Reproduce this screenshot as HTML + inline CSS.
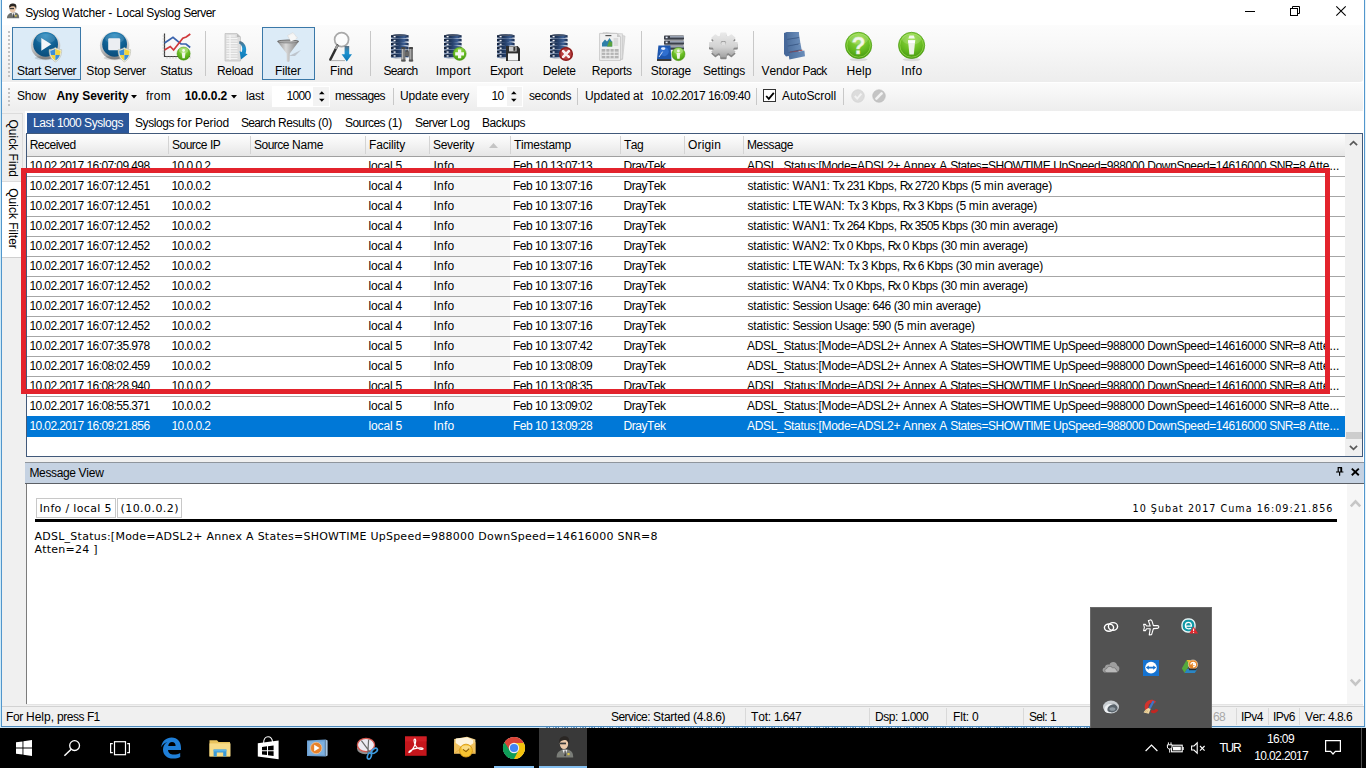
<!DOCTYPE html>
<html lang="tr">
<head>
<meta charset="utf-8">
<title>Syslog Watcher - Local Syslog Server</title>
<style>
html,body{margin:0;padding:0;}
body{width:1366px;height:768px;overflow:hidden;background:#fff;font-family:"Liberation Sans",sans-serif;font-size:12px;color:#000;}
#root{position:relative;width:1366px;height:768px;overflow:hidden;background:#fff;}
.b{position:absolute;box-sizing:border-box;}
.t{position:absolute;white-space:pre;font-family:"Liberation Sans",sans-serif;font-size:12px;line-height:16px;font-kerning:none;}
.t i{font-style:normal;}
.d{position:absolute;white-space:pre;font-family:"DejaVu Sans","Liberation Sans",sans-serif;line-height:16px;font-kerning:none;}
svg{position:absolute;overflow:visible;}
</style>
</head>
<body>
<div id="root">
<div class="b " style="left:0px;top:0px;width:1366px;height:728px;background:#ffffff;"></div>
<div class="b " style="left:2px;top:110px;width:1361px;height:596px;background:#f0f0f0;"></div>
<span class="t" style="left:25.2px;top:5px;word-spacing:-0.33px;"><i style="letter-spacing:-0.34px">Syslog</i> <i style="letter-spacing:-0.24px">Watcher</i> <i style="letter-spacing:1.00px">-</i> <i style="letter-spacing:-0.34px">Local</i> <i style="letter-spacing:-0.34px">Syslog</i> <i style="letter-spacing:-0.56px">Server</i></span>
<div class="b " style="left:2px;top:25px;width:1361px;height:57px;background:linear-gradient(#fcfcfc,#f7f7f7 40%,#ededed);border-radius:0 0 3px 0;"></div>
<div class="b " style="left:2px;top:82.5px;width:1361px;height:28px;background:linear-gradient(#fbfbfb,#f6f6f6 40%,#ededed);border-radius:0 0 3px 0;"></div>
<div class="b " style="left:25px;top:111px;width:1338px;height:23px;background:#ffffff;"></div>
<div class="b " style="left:12px;top:27px;width:69px;height:53px;background:#dcebf7;border:1px solid #3a78a8;"></div>
<div class="b " style="left:262px;top:27px;width:53px;height:53px;background:#dcebf7;border:1px solid #3a78a8;"></div>
<span class="t" style="left:17.0px;top:63px;word-spacing:-0.33px;"><i style="letter-spacing:-0.27px">Start</i> <i style="letter-spacing:-0.56px">Server</i></span>
<span class="t" style="left:86.3px;top:63px;word-spacing:-0.33px;"><i style="letter-spacing:-0.17px">Stop</i> <i style="letter-spacing:-0.56px">Server</i></span>
<span class="t" style="left:160.2px;top:63px;word-spacing:-0.33px;"><i style="letter-spacing:-0.34px">Status</i></span>
<span class="t" style="left:217.0px;top:63px;word-spacing:-0.33px;"><i style="letter-spacing:-0.34px">Reload</i></span>
<span class="t" style="left:275.0px;top:63px;word-spacing:-0.33px;"><i style="letter-spacing:-0.11px">Filter</i></span>
<span class="t" style="left:329.9px;top:63px;word-spacing:-0.33px;"><i style="letter-spacing:-0.09px">Find</i></span>
<span class="t" style="left:383.5px;top:63px;word-spacing:-0.33px;"><i style="letter-spacing:-0.67px">Search</i></span>
<span class="t" style="left:435.7px;top:63px;word-spacing:-0.33px;"><i style="letter-spacing:0.17px">Import</i></span>
<span class="t" style="left:489.9px;top:63px;word-spacing:-0.33px;"><i style="letter-spacing:-0.28px">Export</i></span>
<span class="t" style="left:542.7px;top:63px;word-spacing:-0.33px;"><i style="letter-spacing:-0.28px">Delete</i></span>
<span class="t" style="left:591.8px;top:63px;word-spacing:-0.33px;"><i style="letter-spacing:-0.29px">Reports</i></span>
<span class="t" style="left:650.8px;top:63px;word-spacing:-0.33px;"><i style="letter-spacing:-0.29px">Storage</i></span>
<span class="t" style="left:703.0px;top:63px;word-spacing:-0.33px;"><i style="letter-spacing:-0.17px">Settings</i></span>
<span class="t" style="left:761.6px;top:63px;word-spacing:-0.33px;"><i style="letter-spacing:-0.12px">Vendor</i> <i style="letter-spacing:-0.67px">Pack</i></span>
<span class="t" style="left:846.6px;top:63px;word-spacing:-0.33px;"><i style="letter-spacing:0.08px">Help</i></span>
<span class="t" style="left:901.3px;top:63px;word-spacing:-0.33px;"><i style="letter-spacing:0.25px">Info</i></span>
<div class="b " style="left:205px;top:31px;width:1px;height:45px;background:#c8c8c8;"></div>
<div class="b " style="left:370px;top:31px;width:1px;height:45px;background:#c8c8c8;"></div>
<div class="b " style="left:641px;top:31px;width:1px;height:45px;background:#c8c8c8;"></div>
<div class="b " style="left:753px;top:31px;width:1px;height:45px;background:#c8c8c8;"></div>
<div class="b " style="left:8px;top:31px;width:2px;height:2px;background:#c2c2c2;"></div>
<div class="b " style="left:8px;top:35px;width:2px;height:2px;background:#c2c2c2;"></div>
<div class="b " style="left:8px;top:39px;width:2px;height:2px;background:#c2c2c2;"></div>
<div class="b " style="left:8px;top:43px;width:2px;height:2px;background:#c2c2c2;"></div>
<div class="b " style="left:8px;top:47px;width:2px;height:2px;background:#c2c2c2;"></div>
<div class="b " style="left:8px;top:51px;width:2px;height:2px;background:#c2c2c2;"></div>
<div class="b " style="left:8px;top:55px;width:2px;height:2px;background:#c2c2c2;"></div>
<div class="b " style="left:8px;top:59px;width:2px;height:2px;background:#c2c2c2;"></div>
<div class="b " style="left:8px;top:63px;width:2px;height:2px;background:#c2c2c2;"></div>
<div class="b " style="left:8px;top:67px;width:2px;height:2px;background:#c2c2c2;"></div>
<div class="b " style="left:8px;top:71px;width:2px;height:2px;background:#c2c2c2;"></div>
<div class="b " style="left:8px;top:75px;width:2px;height:2px;background:#c2c2c2;"></div>
<div class="b " style="left:8px;top:88px;width:2px;height:2px;background:#c2c2c2;"></div>
<div class="b " style="left:8px;top:92px;width:2px;height:2px;background:#c2c2c2;"></div>
<div class="b " style="left:8px;top:96px;width:2px;height:2px;background:#c2c2c2;"></div>
<div class="b " style="left:8px;top:100px;width:2px;height:2px;background:#c2c2c2;"></div>
<div class="b " style="left:8px;top:104px;width:2px;height:2px;background:#c2c2c2;"></div>
<span class="t" style="left:17.0px;top:88px;word-spacing:-0.33px;"><i style="letter-spacing:-0.25px">Show</i></span>
<span class="t" style="left:56.5px;top:88px;letter-spacing:-0.064px;font-weight:bold;">Any Severity</span>
<span class="t" style="left:146.0px;top:88px;word-spacing:-0.33px;"><i style="letter-spacing:0.25px">from</i></span>
<span class="t" style="left:184.7px;top:88px;letter-spacing:-0.110px;font-weight:bold;">10.0.0.2</span>
<span class="t" style="left:246.0px;top:88px;word-spacing:-0.33px;"><i style="letter-spacing:-0.17px">last</i></span>
<div class="b " style="left:272px;top:86px;width:58px;height:21px;background:#ffffff;"></div>
<div class="b " style="left:313px;top:87px;width:16px;height:19px;background:#f3f3f3;"></div>
<span class="t" style="left:286.6px;top:88px;word-spacing:-0.33px;"><i style="letter-spacing:-0.67px">1000</i></span>
<span class="t" style="left:335.0px;top:88px;word-spacing:-0.33px;"><i style="letter-spacing:-0.59px">messages</i></span>
<div class="b " style="left:393px;top:88px;width:1px;height:17px;background:#c8c8c8;"></div>
<span class="t" style="left:400.0px;top:88px;word-spacing:-0.33px;"><i style="letter-spacing:-0.12px">Update</i> <i style="letter-spacing:-0.27px">every</i></span>
<div class="b " style="left:477px;top:86px;width:46px;height:21px;background:#ffffff;"></div>
<div class="b " style="left:507px;top:87px;width:15px;height:19px;background:#f3f3f3;"></div>
<span class="t" style="left:491.5px;top:88px;word-spacing:-0.33px;"><i style="letter-spacing:-0.67px">10</i></span>
<span class="t" style="left:529.0px;top:88px;word-spacing:-0.33px;"><i style="letter-spacing:-0.38px">seconds</i></span>
<div class="b " style="left:577px;top:88px;width:1px;height:17px;background:#c8c8c8;"></div>
<span class="t" style="left:585.0px;top:88px;word-spacing:-0.33px;"><i style="letter-spacing:-0.05px">Updated</i> <i style="letter-spacing:-0.00px">at</i></span>
<span class="t" style="left:651.0px;top:88px;word-spacing:-0.33px;"><i style="letter-spacing:-0.61px">10.02.2017</i> <i style="letter-spacing:-0.59px">16:09:40</i></span>
<div class="b " style="left:756px;top:88px;width:1px;height:17px;background:#c8c8c8;"></div>
<div class="b " style="left:763px;top:89px;width:13px;height:13px;background:#ffffff;border:1px solid #333;"></div>
<span class="t" style="left:782.0px;top:88px;word-spacing:-0.33px;"><i style="letter-spacing:-0.07px">AutoScroll</i></span>
<div class="b " style="left:843px;top:88px;width:1px;height:17px;background:#c8c8c8;"></div>
<div class="b " style="left:2px;top:113px;width:21px;height:69px;background:#efefef;border:1px solid #dcdcdc;border-left:none;"></div>
<div class="b " style="left:2px;top:182px;width:20px;height:76px;background:#ffffff;border-bottom:1px solid #cfcfcf;"></div>
<span class="t" style="left:0;top:0;font-size:12px;line-height:16px;letter-spacing:0.017px;transform-origin:0 0;transform:translate(20.50px,119.50px) rotate(90deg);">Quick Find</span>
<span class="t" style="left:0;top:0;font-size:12px;line-height:16px;letter-spacing:-0.016px;transform-origin:0 0;transform:translate(20.50px,188.30px) rotate(90deg);">Quick Filter</span>
<div class="b " style="left:27px;top:113px;width:102px;height:21px;background:#2b579a;"></div>
<span class="t" style="left:33.0px;top:115px;word-spacing:-0.33px;color:#fff;"><i style="letter-spacing:-0.42px">Last</i> <i style="letter-spacing:-0.67px">1000</i> <i style="letter-spacing:-0.43px">Syslogs</i></span>
<span class="t" style="left:135.0px;top:115px;word-spacing:-0.33px;"><i style="letter-spacing:-0.43px">Syslogs</i> <i style="letter-spacing:0.33px">for</i> <i style="letter-spacing:-0.11px">Period</i></span>
<span class="t" style="left:241.0px;top:115px;word-spacing:-0.33px;"><i style="letter-spacing:-0.67px">Search</i> <i style="letter-spacing:-0.43px">Results</i> <i style="letter-spacing:-0.22px">(0)</i></span>
<span class="t" style="left:345.0px;top:115px;word-spacing:-0.33px;"><i style="letter-spacing:-0.57px">Sources</i> <i style="letter-spacing:-0.22px">(1)</i></span>
<span class="t" style="left:415.0px;top:115px;word-spacing:-0.33px;"><i style="letter-spacing:-0.56px">Server</i> <i style="letter-spacing:-0.01px">Log</i></span>
<span class="t" style="left:482.0px;top:115px;word-spacing:-0.33px;"><i style="letter-spacing:-0.43px">Backups</i></span>
<div class="b " style="left:26px;top:133px;width:1337px;height:324px;background:#ffffff;border:1px solid #41597a;"></div>
<div class="b " style="left:27px;top:134px;width:1318px;height:23px;background:linear-gradient(#ffffff,#f4f4f4 45%,#e6e6e6);border-bottom:1px solid #a0a0a0;"></div>
<div class="b " style="left:430px;top:157px;width:80px;height:260px;background:#f7f7f7;"></div>
<span class="t" style="left:29.7px;top:137px;word-spacing:-0.33px;"><i style="letter-spacing:-0.50px">Received</i></span>
<div class="b " style="left:168px;top:136px;width:1px;height:18px;background:#d4d4d4;"></div>
<span class="t" style="left:172.0px;top:137px;word-spacing:-0.33px;"><i style="letter-spacing:-0.50px">Source</i> <i style="letter-spacing:-0.67px">IP</i></span>
<div class="b " style="left:250px;top:136px;width:1px;height:18px;background:#d4d4d4;"></div>
<span class="t" style="left:254.0px;top:137px;word-spacing:-0.33px;"><i style="letter-spacing:-0.50px">Source</i> <i style="letter-spacing:-0.25px">Name</i></span>
<div class="b " style="left:365px;top:136px;width:1px;height:18px;background:#d4d4d4;"></div>
<span class="t" style="left:369.0px;top:137px;word-spacing:-0.33px;"><i style="letter-spacing:-0.17px">Facility</i></span>
<div class="b " style="left:429px;top:136px;width:1px;height:18px;background:#d4d4d4;"></div>
<span class="t" style="left:433.0px;top:137px;word-spacing:-0.33px;"><i style="letter-spacing:-0.29px">Severity</i></span>
<div class="b " style="left:510px;top:136px;width:1px;height:18px;background:#d4d4d4;"></div>
<span class="t" style="left:514.0px;top:137px;word-spacing:-0.33px;"><i style="letter-spacing:-0.26px">Timestamp</i></span>
<div class="b " style="left:620px;top:136px;width:1px;height:18px;background:#d4d4d4;"></div>
<span class="t" style="left:624.0px;top:137px;word-spacing:-0.33px;"><i style="letter-spacing:-0.56px">Tag</i></span>
<div class="b " style="left:684px;top:136px;width:1px;height:18px;background:#d4d4d4;"></div>
<span class="t" style="left:688.0px;top:137px;word-spacing:-0.33px;"><i style="letter-spacing:0.17px">Origin</i></span>
<div class="b " style="left:743px;top:136px;width:1px;height:18px;background:#d4d4d4;"></div>
<span class="t" style="left:747.0px;top:137px;word-spacing:-0.33px;"><i style="letter-spacing:-0.38px">Message</i></span>
<svg style="left:489px;top:143px" width="9" height="5"><path d="M0 5 L4.5 0 L9 5Z" fill="#c4c4c4"/></svg>
<span class="t" style="left:29.5px;top:158px;word-spacing:-0.33px;"><i style="letter-spacing:-0.61px">10.02.2017</i> <i style="letter-spacing:-0.59px">16:07:09.498</i></span>
<span class="t" style="left:171.5px;top:158px;word-spacing:-0.33px;"><i style="letter-spacing:-0.55px">10.0.0.2</i></span>
<span class="t" style="left:368.5px;top:158px;word-spacing:-0.33px;"><i style="letter-spacing:-0.14px">local</i> <i style="letter-spacing:-0.67px">5</i></span>
<span class="t" style="left:433.5px;top:158px;word-spacing:-0.33px;"><i style="letter-spacing:0.25px">Info</i></span>
<span class="t" style="left:513.0px;top:158px;word-spacing:-0.33px;"><i style="letter-spacing:-0.56px">Feb</i> <i style="letter-spacing:-0.67px">10</i> <i style="letter-spacing:-0.59px">13:07:13</i></span>
<span class="t" style="left:623.5px;top:158px;word-spacing:-0.33px;"><i style="letter-spacing:-0.48px">DrayTek</i></span>
<span class="t" style="left:747.0px;top:158px;word-spacing:-0.33px;"><i style="letter-spacing:-0.32px">ADSL_Status:[Mode=ADSL2+</i> <i style="letter-spacing:-0.20px">Annex</i> <i style="letter-spacing:-0.00px">A</i> <i style="letter-spacing:-0.47px">States=SHOWTIME</i> <i style="letter-spacing:-0.43px">UpSpeed=988000</i> <i style="letter-spacing:-0.38px">DownSpeed=14616000</i> <i style="letter-spacing:-0.60px">SNR=8</i> <i style="letter-spacing:-0.05px">Atte...</i></span>
<div class="b " style="left:27px;top:176px;width:1318px;height:1px;background:#a6a6a6;"></div>
<span class="t" style="left:29.5px;top:178px;word-spacing:-0.33px;"><i style="letter-spacing:-0.61px">10.02.2017</i> <i style="letter-spacing:-0.59px">16:07:12.451</i></span>
<span class="t" style="left:171.5px;top:178px;word-spacing:-0.33px;"><i style="letter-spacing:-0.55px">10.0.0.2</i></span>
<span class="t" style="left:368.5px;top:178px;word-spacing:-0.33px;"><i style="letter-spacing:-0.14px">local</i> <i style="letter-spacing:-0.67px">4</i></span>
<span class="t" style="left:433.5px;top:178px;word-spacing:-0.33px;"><i style="letter-spacing:0.25px">Info</i></span>
<span class="t" style="left:513.0px;top:178px;word-spacing:-0.33px;"><i style="letter-spacing:-0.56px">Feb</i> <i style="letter-spacing:-0.67px">10</i> <i style="letter-spacing:-0.59px">13:07:16</i></span>
<span class="t" style="left:623.5px;top:178px;word-spacing:-0.33px;"><i style="letter-spacing:-0.48px">DrayTek</i></span>
<span class="t" style="left:747.5px;top:178px;word-spacing:-0.33px;"><i style="letter-spacing:-0.13px">statistic:</i> <i style="letter-spacing:-0.20px">WAN1:</i> <i style="letter-spacing:-1.16px">Tx</i> <i style="letter-spacing:-0.67px">231</i> <i style="letter-spacing:-0.34px">Kbps,</i> <i style="letter-spacing:-1.33px">Rx</i> <i style="letter-spacing:-0.67px">2720</i> <i style="letter-spacing:-0.34px">Kbps</i> <i style="letter-spacing:-0.33px">(5</i> <i style="letter-spacing:0.22px">min</i> <i style="letter-spacing:-0.29px">average)</i></span>
<div class="b " style="left:27px;top:196px;width:1318px;height:1px;background:#a6a6a6;"></div>
<span class="t" style="left:29.5px;top:198px;word-spacing:-0.33px;"><i style="letter-spacing:-0.61px">10.02.2017</i> <i style="letter-spacing:-0.59px">16:07:12.451</i></span>
<span class="t" style="left:171.5px;top:198px;word-spacing:-0.33px;"><i style="letter-spacing:-0.55px">10.0.0.2</i></span>
<span class="t" style="left:368.5px;top:198px;word-spacing:-0.33px;"><i style="letter-spacing:-0.14px">local</i> <i style="letter-spacing:-0.67px">4</i></span>
<span class="t" style="left:433.5px;top:198px;word-spacing:-0.33px;"><i style="letter-spacing:0.25px">Info</i></span>
<span class="t" style="left:513.0px;top:198px;word-spacing:-0.33px;"><i style="letter-spacing:-0.56px">Feb</i> <i style="letter-spacing:-0.67px">10</i> <i style="letter-spacing:-0.59px">13:07:16</i></span>
<span class="t" style="left:623.5px;top:198px;word-spacing:-0.33px;"><i style="letter-spacing:-0.48px">DrayTek</i></span>
<span class="t" style="left:747.5px;top:198px;word-spacing:-0.33px;"><i style="letter-spacing:-0.13px">statistic:</i> <i style="letter-spacing:-1.34px">LTE</i> <i style="letter-spacing:-0.08px">WAN:</i> <i style="letter-spacing:-1.16px">Tx</i> <i style="letter-spacing:-0.67px">3</i> <i style="letter-spacing:-0.34px">Kbps,</i> <i style="letter-spacing:-1.33px">Rx</i> <i style="letter-spacing:-0.67px">3</i> <i style="letter-spacing:-0.34px">Kbps</i> <i style="letter-spacing:-0.33px">(5</i> <i style="letter-spacing:0.22px">min</i> <i style="letter-spacing:-0.29px">average)</i></span>
<div class="b " style="left:27px;top:216px;width:1318px;height:1px;background:#a6a6a6;"></div>
<span class="t" style="left:29.5px;top:218px;word-spacing:-0.33px;"><i style="letter-spacing:-0.61px">10.02.2017</i> <i style="letter-spacing:-0.59px">16:07:12.452</i></span>
<span class="t" style="left:171.5px;top:218px;word-spacing:-0.33px;"><i style="letter-spacing:-0.55px">10.0.0.2</i></span>
<span class="t" style="left:368.5px;top:218px;word-spacing:-0.33px;"><i style="letter-spacing:-0.14px">local</i> <i style="letter-spacing:-0.67px">4</i></span>
<span class="t" style="left:433.5px;top:218px;word-spacing:-0.33px;"><i style="letter-spacing:0.25px">Info</i></span>
<span class="t" style="left:513.0px;top:218px;word-spacing:-0.33px;"><i style="letter-spacing:-0.56px">Feb</i> <i style="letter-spacing:-0.67px">10</i> <i style="letter-spacing:-0.59px">13:07:16</i></span>
<span class="t" style="left:623.5px;top:218px;word-spacing:-0.33px;"><i style="letter-spacing:-0.48px">DrayTek</i></span>
<span class="t" style="left:747.5px;top:218px;word-spacing:-0.33px;"><i style="letter-spacing:-0.13px">statistic:</i> <i style="letter-spacing:-0.20px">WAN1:</i> <i style="letter-spacing:-1.16px">Tx</i> <i style="letter-spacing:-0.67px">264</i> <i style="letter-spacing:-0.34px">Kbps,</i> <i style="letter-spacing:-1.33px">Rx</i> <i style="letter-spacing:-0.67px">3505</i> <i style="letter-spacing:-0.34px">Kbps</i> <i style="letter-spacing:-0.45px">(30</i> <i style="letter-spacing:0.22px">min</i> <i style="letter-spacing:-0.29px">average)</i></span>
<div class="b " style="left:27px;top:236px;width:1318px;height:1px;background:#a6a6a6;"></div>
<span class="t" style="left:29.5px;top:238px;word-spacing:-0.33px;"><i style="letter-spacing:-0.61px">10.02.2017</i> <i style="letter-spacing:-0.59px">16:07:12.452</i></span>
<span class="t" style="left:171.5px;top:238px;word-spacing:-0.33px;"><i style="letter-spacing:-0.55px">10.0.0.2</i></span>
<span class="t" style="left:368.5px;top:238px;word-spacing:-0.33px;"><i style="letter-spacing:-0.14px">local</i> <i style="letter-spacing:-0.67px">4</i></span>
<span class="t" style="left:433.5px;top:238px;word-spacing:-0.33px;"><i style="letter-spacing:0.25px">Info</i></span>
<span class="t" style="left:513.0px;top:238px;word-spacing:-0.33px;"><i style="letter-spacing:-0.56px">Feb</i> <i style="letter-spacing:-0.67px">10</i> <i style="letter-spacing:-0.59px">13:07:16</i></span>
<span class="t" style="left:623.5px;top:238px;word-spacing:-0.33px;"><i style="letter-spacing:-0.48px">DrayTek</i></span>
<span class="t" style="left:747.5px;top:238px;word-spacing:-0.33px;"><i style="letter-spacing:-0.13px">statistic:</i> <i style="letter-spacing:-0.20px">WAN2:</i> <i style="letter-spacing:-1.16px">Tx</i> <i style="letter-spacing:-0.67px">0</i> <i style="letter-spacing:-0.34px">Kbps,</i> <i style="letter-spacing:-1.33px">Rx</i> <i style="letter-spacing:-0.67px">0</i> <i style="letter-spacing:-0.34px">Kbps</i> <i style="letter-spacing:-0.45px">(30</i> <i style="letter-spacing:0.22px">min</i> <i style="letter-spacing:-0.29px">average)</i></span>
<div class="b " style="left:27px;top:256px;width:1318px;height:1px;background:#a6a6a6;"></div>
<span class="t" style="left:29.5px;top:258px;word-spacing:-0.33px;"><i style="letter-spacing:-0.61px">10.02.2017</i> <i style="letter-spacing:-0.59px">16:07:12.452</i></span>
<span class="t" style="left:171.5px;top:258px;word-spacing:-0.33px;"><i style="letter-spacing:-0.55px">10.0.0.2</i></span>
<span class="t" style="left:368.5px;top:258px;word-spacing:-0.33px;"><i style="letter-spacing:-0.14px">local</i> <i style="letter-spacing:-0.67px">4</i></span>
<span class="t" style="left:433.5px;top:258px;word-spacing:-0.33px;"><i style="letter-spacing:0.25px">Info</i></span>
<span class="t" style="left:513.0px;top:258px;word-spacing:-0.33px;"><i style="letter-spacing:-0.56px">Feb</i> <i style="letter-spacing:-0.67px">10</i> <i style="letter-spacing:-0.59px">13:07:16</i></span>
<span class="t" style="left:623.5px;top:258px;word-spacing:-0.33px;"><i style="letter-spacing:-0.48px">DrayTek</i></span>
<span class="t" style="left:747.5px;top:258px;word-spacing:-0.33px;"><i style="letter-spacing:-0.13px">statistic:</i> <i style="letter-spacing:-1.34px">LTE</i> <i style="letter-spacing:-0.08px">WAN:</i> <i style="letter-spacing:-1.16px">Tx</i> <i style="letter-spacing:-0.67px">3</i> <i style="letter-spacing:-0.34px">Kbps,</i> <i style="letter-spacing:-1.33px">Rx</i> <i style="letter-spacing:-0.67px">6</i> <i style="letter-spacing:-0.34px">Kbps</i> <i style="letter-spacing:-0.45px">(30</i> <i style="letter-spacing:0.22px">min</i> <i style="letter-spacing:-0.29px">average)</i></span>
<div class="b " style="left:27px;top:276px;width:1318px;height:1px;background:#a6a6a6;"></div>
<span class="t" style="left:29.5px;top:278px;word-spacing:-0.33px;"><i style="letter-spacing:-0.61px">10.02.2017</i> <i style="letter-spacing:-0.59px">16:07:12.452</i></span>
<span class="t" style="left:171.5px;top:278px;word-spacing:-0.33px;"><i style="letter-spacing:-0.55px">10.0.0.2</i></span>
<span class="t" style="left:368.5px;top:278px;word-spacing:-0.33px;"><i style="letter-spacing:-0.14px">local</i> <i style="letter-spacing:-0.67px">4</i></span>
<span class="t" style="left:433.5px;top:278px;word-spacing:-0.33px;"><i style="letter-spacing:0.25px">Info</i></span>
<span class="t" style="left:513.0px;top:278px;word-spacing:-0.33px;"><i style="letter-spacing:-0.56px">Feb</i> <i style="letter-spacing:-0.67px">10</i> <i style="letter-spacing:-0.59px">13:07:16</i></span>
<span class="t" style="left:623.5px;top:278px;word-spacing:-0.33px;"><i style="letter-spacing:-0.48px">DrayTek</i></span>
<span class="t" style="left:747.5px;top:278px;word-spacing:-0.33px;"><i style="letter-spacing:-0.13px">statistic:</i> <i style="letter-spacing:-0.20px">WAN4:</i> <i style="letter-spacing:-1.16px">Tx</i> <i style="letter-spacing:-0.67px">0</i> <i style="letter-spacing:-0.34px">Kbps,</i> <i style="letter-spacing:-1.33px">Rx</i> <i style="letter-spacing:-0.67px">0</i> <i style="letter-spacing:-0.34px">Kbps</i> <i style="letter-spacing:-0.45px">(30</i> <i style="letter-spacing:0.22px">min</i> <i style="letter-spacing:-0.29px">average)</i></span>
<div class="b " style="left:27px;top:296px;width:1318px;height:1px;background:#a6a6a6;"></div>
<span class="t" style="left:29.5px;top:298px;word-spacing:-0.33px;"><i style="letter-spacing:-0.61px">10.02.2017</i> <i style="letter-spacing:-0.59px">16:07:12.452</i></span>
<span class="t" style="left:171.5px;top:298px;word-spacing:-0.33px;"><i style="letter-spacing:-0.55px">10.0.0.2</i></span>
<span class="t" style="left:368.5px;top:298px;word-spacing:-0.33px;"><i style="letter-spacing:-0.14px">local</i> <i style="letter-spacing:-0.67px">4</i></span>
<span class="t" style="left:433.5px;top:298px;word-spacing:-0.33px;"><i style="letter-spacing:0.25px">Info</i></span>
<span class="t" style="left:513.0px;top:298px;word-spacing:-0.33px;"><i style="letter-spacing:-0.56px">Feb</i> <i style="letter-spacing:-0.67px">10</i> <i style="letter-spacing:-0.59px">13:07:16</i></span>
<span class="t" style="left:623.5px;top:298px;word-spacing:-0.33px;"><i style="letter-spacing:-0.48px">DrayTek</i></span>
<span class="t" style="left:747.5px;top:298px;word-spacing:-0.33px;"><i style="letter-spacing:-0.13px">statistic:</i> <i style="letter-spacing:-0.53px">Session</i> <i style="letter-spacing:-0.50px">Usage:</i> <i style="letter-spacing:-0.67px">646</i> <i style="letter-spacing:-0.45px">(30</i> <i style="letter-spacing:0.22px">min</i> <i style="letter-spacing:-0.29px">average)</i></span>
<div class="b " style="left:27px;top:316px;width:1318px;height:1px;background:#a6a6a6;"></div>
<span class="t" style="left:29.5px;top:318px;word-spacing:-0.33px;"><i style="letter-spacing:-0.61px">10.02.2017</i> <i style="letter-spacing:-0.59px">16:07:12.452</i></span>
<span class="t" style="left:171.5px;top:318px;word-spacing:-0.33px;"><i style="letter-spacing:-0.55px">10.0.0.2</i></span>
<span class="t" style="left:368.5px;top:318px;word-spacing:-0.33px;"><i style="letter-spacing:-0.14px">local</i> <i style="letter-spacing:-0.67px">4</i></span>
<span class="t" style="left:433.5px;top:318px;word-spacing:-0.33px;"><i style="letter-spacing:0.25px">Info</i></span>
<span class="t" style="left:513.0px;top:318px;word-spacing:-0.33px;"><i style="letter-spacing:-0.56px">Feb</i> <i style="letter-spacing:-0.67px">10</i> <i style="letter-spacing:-0.59px">13:07:16</i></span>
<span class="t" style="left:623.5px;top:318px;word-spacing:-0.33px;"><i style="letter-spacing:-0.48px">DrayTek</i></span>
<span class="t" style="left:747.5px;top:318px;word-spacing:-0.33px;"><i style="letter-spacing:-0.13px">statistic:</i> <i style="letter-spacing:-0.53px">Session</i> <i style="letter-spacing:-0.50px">Usage:</i> <i style="letter-spacing:-0.67px">590</i> <i style="letter-spacing:-0.33px">(5</i> <i style="letter-spacing:0.22px">min</i> <i style="letter-spacing:-0.29px">average)</i></span>
<div class="b " style="left:27px;top:336px;width:1318px;height:1px;background:#a6a6a6;"></div>
<span class="t" style="left:29.5px;top:338px;word-spacing:-0.33px;"><i style="letter-spacing:-0.61px">10.02.2017</i> <i style="letter-spacing:-0.59px">16:07:35.978</i></span>
<span class="t" style="left:171.5px;top:338px;word-spacing:-0.33px;"><i style="letter-spacing:-0.55px">10.0.0.2</i></span>
<span class="t" style="left:368.5px;top:338px;word-spacing:-0.33px;"><i style="letter-spacing:-0.14px">local</i> <i style="letter-spacing:-0.67px">5</i></span>
<span class="t" style="left:433.5px;top:338px;word-spacing:-0.33px;"><i style="letter-spacing:0.25px">Info</i></span>
<span class="t" style="left:513.0px;top:338px;word-spacing:-0.33px;"><i style="letter-spacing:-0.56px">Feb</i> <i style="letter-spacing:-0.67px">10</i> <i style="letter-spacing:-0.59px">13:07:42</i></span>
<span class="t" style="left:623.5px;top:338px;word-spacing:-0.33px;"><i style="letter-spacing:-0.48px">DrayTek</i></span>
<span class="t" style="left:747.0px;top:338px;word-spacing:-0.33px;"><i style="letter-spacing:-0.32px">ADSL_Status:[Mode=ADSL2+</i> <i style="letter-spacing:-0.20px">Annex</i> <i style="letter-spacing:-0.00px">A</i> <i style="letter-spacing:-0.47px">States=SHOWTIME</i> <i style="letter-spacing:-0.43px">UpSpeed=988000</i> <i style="letter-spacing:-0.38px">DownSpeed=14616000</i> <i style="letter-spacing:-0.60px">SNR=8</i> <i style="letter-spacing:-0.05px">Atte...</i></span>
<div class="b " style="left:27px;top:356px;width:1318px;height:1px;background:#a6a6a6;"></div>
<span class="t" style="left:29.5px;top:358px;word-spacing:-0.33px;"><i style="letter-spacing:-0.61px">10.02.2017</i> <i style="letter-spacing:-0.59px">16:08:02.459</i></span>
<span class="t" style="left:171.5px;top:358px;word-spacing:-0.33px;"><i style="letter-spacing:-0.55px">10.0.0.2</i></span>
<span class="t" style="left:368.5px;top:358px;word-spacing:-0.33px;"><i style="letter-spacing:-0.14px">local</i> <i style="letter-spacing:-0.67px">5</i></span>
<span class="t" style="left:433.5px;top:358px;word-spacing:-0.33px;"><i style="letter-spacing:0.25px">Info</i></span>
<span class="t" style="left:513.0px;top:358px;word-spacing:-0.33px;"><i style="letter-spacing:-0.56px">Feb</i> <i style="letter-spacing:-0.67px">10</i> <i style="letter-spacing:-0.59px">13:08:09</i></span>
<span class="t" style="left:623.5px;top:358px;word-spacing:-0.33px;"><i style="letter-spacing:-0.48px">DrayTek</i></span>
<span class="t" style="left:747.0px;top:358px;word-spacing:-0.33px;"><i style="letter-spacing:-0.32px">ADSL_Status:[Mode=ADSL2+</i> <i style="letter-spacing:-0.20px">Annex</i> <i style="letter-spacing:-0.00px">A</i> <i style="letter-spacing:-0.47px">States=SHOWTIME</i> <i style="letter-spacing:-0.43px">UpSpeed=988000</i> <i style="letter-spacing:-0.38px">DownSpeed=14616000</i> <i style="letter-spacing:-0.60px">SNR=8</i> <i style="letter-spacing:-0.05px">Atte...</i></span>
<div class="b " style="left:27px;top:376px;width:1318px;height:1px;background:#a6a6a6;"></div>
<span class="t" style="left:29.5px;top:378px;word-spacing:-0.33px;"><i style="letter-spacing:-0.61px">10.02.2017</i> <i style="letter-spacing:-0.59px">16:08:28.940</i></span>
<span class="t" style="left:171.5px;top:378px;word-spacing:-0.33px;"><i style="letter-spacing:-0.55px">10.0.0.2</i></span>
<span class="t" style="left:368.5px;top:378px;word-spacing:-0.33px;"><i style="letter-spacing:-0.14px">local</i> <i style="letter-spacing:-0.67px">5</i></span>
<span class="t" style="left:433.5px;top:378px;word-spacing:-0.33px;"><i style="letter-spacing:0.25px">Info</i></span>
<span class="t" style="left:513.0px;top:378px;word-spacing:-0.33px;"><i style="letter-spacing:-0.56px">Feb</i> <i style="letter-spacing:-0.67px">10</i> <i style="letter-spacing:-0.59px">13:08:35</i></span>
<span class="t" style="left:623.5px;top:378px;word-spacing:-0.33px;"><i style="letter-spacing:-0.48px">DrayTek</i></span>
<span class="t" style="left:747.0px;top:378px;word-spacing:-0.33px;"><i style="letter-spacing:-0.32px">ADSL_Status:[Mode=ADSL2+</i> <i style="letter-spacing:-0.20px">Annex</i> <i style="letter-spacing:-0.00px">A</i> <i style="letter-spacing:-0.47px">States=SHOWTIME</i> <i style="letter-spacing:-0.43px">UpSpeed=988000</i> <i style="letter-spacing:-0.38px">DownSpeed=14616000</i> <i style="letter-spacing:-0.60px">SNR=8</i> <i style="letter-spacing:-0.05px">Atte...</i></span>
<div class="b " style="left:27px;top:396px;width:1318px;height:1px;background:#a6a6a6;"></div>
<span class="t" style="left:29.5px;top:398px;word-spacing:-0.33px;"><i style="letter-spacing:-0.61px">10.02.2017</i> <i style="letter-spacing:-0.59px">16:08:55.371</i></span>
<span class="t" style="left:171.5px;top:398px;word-spacing:-0.33px;"><i style="letter-spacing:-0.55px">10.0.0.2</i></span>
<span class="t" style="left:368.5px;top:398px;word-spacing:-0.33px;"><i style="letter-spacing:-0.14px">local</i> <i style="letter-spacing:-0.67px">5</i></span>
<span class="t" style="left:433.5px;top:398px;word-spacing:-0.33px;"><i style="letter-spacing:0.25px">Info</i></span>
<span class="t" style="left:513.0px;top:398px;word-spacing:-0.33px;"><i style="letter-spacing:-0.56px">Feb</i> <i style="letter-spacing:-0.67px">10</i> <i style="letter-spacing:-0.59px">13:09:02</i></span>
<span class="t" style="left:623.5px;top:398px;word-spacing:-0.33px;"><i style="letter-spacing:-0.48px">DrayTek</i></span>
<span class="t" style="left:747.0px;top:398px;word-spacing:-0.33px;"><i style="letter-spacing:-0.32px">ADSL_Status:[Mode=ADSL2+</i> <i style="letter-spacing:-0.20px">Annex</i> <i style="letter-spacing:-0.00px">A</i> <i style="letter-spacing:-0.47px">States=SHOWTIME</i> <i style="letter-spacing:-0.43px">UpSpeed=988000</i> <i style="letter-spacing:-0.38px">DownSpeed=14616000</i> <i style="letter-spacing:-0.60px">SNR=8</i> <i style="letter-spacing:-0.05px">Atte...</i></span>
<div class="b " style="left:27px;top:416px;width:1318px;height:1px;background:#a6a6a6;"></div>
<div class="b " style="left:27px;top:416px;width:1318px;height:21px;background:#0078d7;"></div>
<span class="t" style="left:29.5px;top:418px;word-spacing:-0.33px;color:#fff;"><i style="letter-spacing:-0.61px">10.02.2017</i> <i style="letter-spacing:-0.59px">16:09:21.856</i></span>
<span class="t" style="left:171.5px;top:418px;word-spacing:-0.33px;color:#fff;"><i style="letter-spacing:-0.55px">10.0.0.2</i></span>
<span class="t" style="left:368.5px;top:418px;word-spacing:-0.33px;color:#fff;"><i style="letter-spacing:-0.14px">local</i> <i style="letter-spacing:-0.67px">5</i></span>
<span class="t" style="left:433.5px;top:418px;word-spacing:-0.33px;color:#fff;"><i style="letter-spacing:0.25px">Info</i></span>
<span class="t" style="left:513.0px;top:418px;word-spacing:-0.33px;color:#fff;"><i style="letter-spacing:-0.56px">Feb</i> <i style="letter-spacing:-0.67px">10</i> <i style="letter-spacing:-0.59px">13:09:28</i></span>
<span class="t" style="left:623.5px;top:418px;word-spacing:-0.33px;color:#fff;"><i style="letter-spacing:-0.48px">DrayTek</i></span>
<span class="t" style="left:747.0px;top:418px;word-spacing:-0.33px;color:#fff;"><i style="letter-spacing:-0.32px">ADSL_Status:[Mode=ADSL2+</i> <i style="letter-spacing:-0.20px">Annex</i> <i style="letter-spacing:-0.00px">A</i> <i style="letter-spacing:-0.47px">States=SHOWTIME</i> <i style="letter-spacing:-0.43px">UpSpeed=988000</i> <i style="letter-spacing:-0.38px">DownSpeed=14616000</i> <i style="letter-spacing:-0.60px">SNR=8</i> <i style="letter-spacing:-0.05px">Atte...</i></span>
<div class="b " style="left:1345px;top:134px;width:17px;height:322px;background:#f0f0f0;"></div>
<svg style="left:1349px;top:140px" width="9" height="6"><path d="M0.9 5.2 L4.5 1.6 L8.1 5.2" fill="none" stroke="#5a5a5a" stroke-width="1.7"/></svg>
<svg style="left:1349px;top:445px" width="9" height="6"><path d="M0.9 0.8 L4.5 4.4 L8.1 0.8" fill="none" stroke="#5a5a5a" stroke-width="1.7"/></svg>
<div class="b " style="left:1346px;top:431.5px;width:16px;height:7px;background:#cdcdcd;"></div>
<div class="b " style="left:21px;top:168px;width:1309px;height:226px;border:5px solid #e3232c;"></div>
<div class="b " style="left:25px;top:462px;width:1339px;height:22px;background:#c5d2e2;border-top:1px solid #8f959c;border-bottom:1px solid #5c6066;"></div>
<span class="t" style="left:29.5px;top:465px;word-spacing:-0.33px;"><i style="letter-spacing:-0.38px">Message</i> <i style="letter-spacing:-0.25px">View</i></span>
<div class="b " style="left:26px;top:484px;width:1337px;height:220px;background:#ffffff;border-left:1px solid #7c7c7c;"></div>
<div class="b " style="left:26px;top:704px;width:1337px;height:1px;background:#e4e4e4;"></div>
<div class="b " style="left:36px;top:498px;width:80px;height:20px;background:#fff;border:1px solid #c8c8c8;"></div>
<div class="b " style="left:117px;top:498px;width:65px;height:20px;background:#fff;border:1px solid #c8c8c8;"></div>
<span class="d" style="left:39.5px;top:501px;letter-spacing:0.335px;font-size:11px;">Info / local 5</span>
<span class="d" style="left:120.5px;top:501px;letter-spacing:0.437px;font-size:11px;">(10.0.0.2)</span>
<div class="b " style="left:35px;top:519px;width:1302px;height:3px;background:#000;"></div>
<span class="d" style="left:1132.5px;top:501px;letter-spacing:1.024px;font-size:9.6px;">10 Şubat 2017 Cuma 16:09:21.856</span>
<span class="d" style="left:34.5px;top:529px;letter-spacing:0.249px;font-size:11px;">ADSL_Status:[Mode=ADSL2+ Annex A States=SHOWTIME UpSpeed=988000 DownSpeed=14616000 SNR=8</span>
<span class="d" style="left:34.5px;top:542px;letter-spacing:0.234px;font-size:11px;">Atten=24 ]</span>
<div class="b " style="left:1347px;top:484px;width:16px;height:220px;background:#f6f6f6;"></div>
<svg style="left:1350px;top:499px" width="11" height="9"><path d="M0.8 7.4 L5.5 2.4 L10.2 7.4" fill="none" stroke="#c6c6c6" stroke-width="2.6"/></svg>
<svg style="left:1350px;top:678px" width="11" height="9"><path d="M0.8 1.6 L5.5 6.6 L10.2 1.6" fill="none" stroke="#c6c6c6" stroke-width="2.6"/></svg>
<svg style="left:1336px;top:467px" width="8" height="9"><path d="M1.6 0.6h4.4M2.2 0.6v4.4M5.6 0.6v4.4M4.9 0.6v4.4M0 5h7.4M3.6 5v3.8" stroke="#000" stroke-width="1.2" fill="none"/></svg>
<svg style="left:1351px;top:468px" width="9" height="8"><path d="M0.8 0.6l7 6.6M7.8 0.6l-7 6.6" stroke="#000" stroke-width="1.9" fill="none"/></svg>
<div class="b " style="left:2px;top:706px;width:1362px;height:20px;background:#f0f0f0;border-top:1px solid #d2d2d2;"></div>
<span class="t" style="left:6.0px;top:709px;word-spacing:-0.33px;"><i style="letter-spacing:-0.33px">For</i> <i style="letter-spacing:-0.00px">Help,</i> <i style="letter-spacing:-0.47px">press</i> <i style="letter-spacing:-1.00px">F1</i></span>
<div class="b " style="left:745px;top:708px;width:1px;height:17px;background:#d9d9d9;"></div>
<div class="b " style="left:869px;top:708px;width:1px;height:17px;background:#d9d9d9;"></div>
<div class="b " style="left:946px;top:708px;width:1px;height:17px;background:#d9d9d9;"></div>
<div class="b " style="left:1023px;top:708px;width:1px;height:17px;background:#d9d9d9;"></div>
<div class="b " style="left:1236px;top:708px;width:1px;height:17px;background:#d9d9d9;"></div>
<div class="b " style="left:1268px;top:708px;width:1px;height:17px;background:#d9d9d9;"></div>
<div class="b " style="left:1299px;top:708px;width:1px;height:17px;background:#d9d9d9;"></div>
<span class="t" style="left:611.0px;top:709px;word-spacing:-0.33px;"><i style="letter-spacing:-0.54px">Service:</i> <i style="letter-spacing:-0.24px">Started</i> <i style="letter-spacing:-0.38px">(4.8.6)</i></span>
<span class="t" style="left:751.0px;top:709px;word-spacing:-0.33px;"><i style="letter-spacing:-0.17px">Tot:</i> <i style="letter-spacing:-0.61px">1.647</i></span>
<span class="t" style="left:875.0px;top:709px;word-spacing:-0.33px;"><i style="letter-spacing:-0.42px">Dsp:</i> <i style="letter-spacing:-0.61px">1.000</i></span>
<span class="t" style="left:953.0px;top:709px;word-spacing:-0.33px;"><i style="letter-spacing:-0.17px">Flt:</i> <i style="letter-spacing:-0.67px">0</i></span>
<span class="t" style="left:1029.0px;top:709px;word-spacing:-0.33px;"><i style="letter-spacing:-0.67px">Sel:</i> <i style="letter-spacing:-0.67px">1</i></span>
<span class="t" style="left:1213.0px;top:709px;word-spacing:-0.33px;color:#a8a8a8;"><i style="letter-spacing:-0.67px">68</i></span>
<span class="t" style="left:1241.0px;top:709px;word-spacing:-0.33px;"><i style="letter-spacing:-0.50px">IPv4</i></span>
<span class="t" style="left:1273.0px;top:709px;word-spacing:-0.33px;"><i style="letter-spacing:-0.50px">IPv6</i></span>
<span class="t" style="left:1305.0px;top:709px;word-spacing:-0.33px;"><i style="letter-spacing:-0.50px">Ver:</i> <i style="letter-spacing:-0.54px">4.8.6</i></span>
<div class="b " style="left:0px;top:0px;width:1px;height:727px;background:#cdeaf8;"></div>
<div class="b " style="left:1px;top:0px;width:1px;height:727px;background:#5296cc;"></div>
<div class="b " style="left:1364px;top:0px;width:1px;height:727px;background:#5296cc;"></div>
<div class="b " style="left:1365px;top:0px;width:1px;height:727px;background:#e6f3fa;"></div>
<div class="b " style="left:1px;top:726px;width:1364px;height:1px;background:#4e8abc;"></div>
<div class="b " style="left:0px;top:727px;width:1366px;height:1px;background:#cfe6f4;"></div>
<div class="b " style="left:546px;top:727px;width:544px;height:2px;background:repeating-linear-gradient(90deg,#5d93c4 0,#5d93c4 2px,#d7e9f5 2px,#d7e9f5 3px,#3f6f9f 3px,#3f6f9f 4px,#e4f1f9 4px,#e4f1f9 7px,#6b9bc8 7px,#6b9bc8 8px,#eaf4fa 8px,#eaf4fa 9px);opacity:0.85;"></div>
<div class="b " style="left:0px;top:728px;width:1366px;height:40px;background:#000000;"></div>
<div class="b " style="left:539px;top:728px;width:48px;height:40px;background:#393939;"></div>
<div class="b " style="left:539px;top:766px;width:48px;height:2px;background:#84bff0;"></div>
<div class="b " style="left:494px;top:766px;width:40px;height:2px;background:#84bff0;"></div>
<span class="t" style="left:1219.4px;top:740px;word-spacing:-0.33px;color:#fff;"><i style="letter-spacing:-1.22px">TUR</i></span>
<span class="t" style="left:1267.0px;top:731px;word-spacing:-0.33px;color:#fff;"><i style="letter-spacing:-0.61px">16:09</i></span>
<span class="t" style="left:1254.2px;top:748px;word-spacing:-0.33px;color:#fff;"><i style="letter-spacing:-0.61px">10.02.2017</i></span>
<div class="b " style="left:1090px;top:607px;width:122px;height:121px;background:#525252;border:1px solid #6a6a6a;border-bottom:none;"></div>
<svg width="0" height="0" style="left:0;top:0">
<defs>
<radialGradient id="gBlue" cx="0.5" cy="0.15" r="0.9"><stop offset="0" stop-color="#2a8bc0"/><stop offset="0.55" stop-color="#0f5f92"/><stop offset="1" stop-color="#0a4a78"/></radialGradient>
<linearGradient id="gRim" x1="0" y1="0" x2="0" y2="1"><stop offset="0" stop-color="#e8e8e8"/><stop offset="0.6" stop-color="#c4c4c4"/><stop offset="1" stop-color="#8e8e8e"/></linearGradient>
<radialGradient id="gGreen" cx="0.5" cy="0.25" r="0.8"><stop offset="0" stop-color="#9be04a"/><stop offset="0.6" stop-color="#63b81f"/><stop offset="1" stop-color="#3f8f0d"/></radialGradient>
<linearGradient id="gDb" x1="0" y1="0" x2="1" y2="0"><stop offset="0" stop-color="#13213a"/><stop offset="0.4" stop-color="#213a62"/><stop offset="0.75" stop-color="#3b5d92"/><stop offset="1" stop-color="#17294a"/></linearGradient>
<linearGradient id="gDbHi" x1="0" y1="0" x2="1" y2="0"><stop offset="0" stop-color="#4a6a9c"/><stop offset="0.45" stop-color="#c9d6ea"/><stop offset="0.75" stop-color="#f4f7fb"/><stop offset="1" stop-color="#7a96c0"/></linearGradient>
<linearGradient id="gGray" x1="0" y1="0" x2="0" y2="1"><stop offset="0" stop-color="#efefef"/><stop offset="1" stop-color="#bdbdbd"/></linearGradient>
<linearGradient id="gFun" x1="0" y1="0" x2="1" y2="0"><stop offset="0" stop-color="#8a8a8a"/><stop offset="0.4" stop-color="#d9d9d9"/><stop offset="1" stop-color="#7c7c7c"/></linearGradient>
<linearGradient id="gArrow" x1="0" y1="0" x2="0" y2="1"><stop offset="0" stop-color="#5a6f80"/><stop offset="0.4" stop-color="#1f93d0"/><stop offset="1" stop-color="#0c76b4"/></linearGradient>
<linearGradient id="gGear" x1="0" y1="0" x2="0" y2="1"><stop offset="0" stop-color="#e9e9e9"/><stop offset="0.6" stop-color="#d2d2d2"/><stop offset="1" stop-color="#a5a5a5"/></linearGradient>
<linearGradient id="gCab" x1="0" y1="0" x2="1" y2="0"><stop offset="0" stop-color="#4d6f9d"/><stop offset="1" stop-color="#6a8dba"/></linearGradient>
<g id="shield">
 <path d="M6.5 0.3 C8.5 1.8 10.8 2.4 12.7 2.4 C13 7.5 11.2 12 6.5 14.7 C1.8 12 0 7.5 0.3 2.4 C2.2 2.4 4.5 1.8 6.5 0.3Z" fill="#eef0e6" stroke="#b9b9a8" stroke-width="0.6"/>
 <path d="M6.5 1.6 C4.8 2.8 3 3.3 1.4 3.4 C1.3 5 1.5 6.4 2 7.7 L6.5 7.7Z" fill="#3b8ed8"/>
 <path d="M6.5 1.6 C8.2 2.8 10 3.3 11.6 3.4 C11.7 5 11.5 6.4 11 7.7 L6.5 7.7Z" fill="#f3d43c"/>
 <path d="M2 7.7 C2.8 10 4.3 11.9 6.5 13.3 L6.5 7.7Z" fill="#f3d43c"/>
 <path d="M11 7.7 C10.2 10 8.7 11.9 6.5 13.3 L6.5 7.7Z" fill="#3b8ed8"/>
</g>
<g id="db">
 <ellipse cx="8.8" cy="22.3" rx="9.4" ry="2.2" fill="#000" opacity="0.18"/>
 <g id="dbl"><path d="M0 0.9 Q8.8 -0.9 17.6 0.9 L17.6 3.1 Q8.8 4.9 0 3.1Z" fill="url(#gDb)"/><path d="M0 3.1 Q8.8 4.9 17.6 3.1 L17.6 3.9 Q8.8 5.7 0 3.9Z" fill="url(#gDbHi)"/><rect x="2.6" y="1.7" width="2" height="1.4" fill="#f4f6fa"/></g>
 <use href="#dbl" y="3.85"/><use href="#dbl" y="7.7"/><use href="#dbl" y="11.55"/><use href="#dbl" y="15.4"/><use href="#dbl" y="19.25"/>
 <path d="M0 0.9 Q8.8 -0.9 17.6 0.9 Q8.8 2.5 0 0.9Z" fill="#4b5568"/>
</g>
<g id="gi">
 <circle cx="0" cy="0" r="6.6" fill="url(#gGreen)" stroke="#4f9a18" stroke-width="0.5"/>
 <ellipse cx="0" cy="-3.2" rx="4.6" ry="2.8" fill="#fff" opacity="0.28"/>
 <circle cx="0" cy="-3.1" r="1.4" fill="#f4f8ee"/>
 <path d="M-1.9 -1.2 L1.9 -1.2 L1.2 4.6 L-1.2 4.6Z" fill="#f0f4ea"/>
</g>
</defs></svg>
<svg style="left:30px;top:31.4px" width="34" height="34" viewBox="0 0 34 34"><ellipse cx="15.6" cy="14.6" rx="14.7" ry="14" fill="url(#gRim)"/><ellipse cx="15.6" cy="27" rx="11" ry="2.2" fill="#000" opacity="0.12"/><circle cx="15.6" cy="13.3" r="12.4" fill="url(#gBlue)"/><ellipse cx="15.6" cy="7.5" rx="9.5" ry="5" fill="#fff" opacity="0.13"/><path d="M11.3 7 L21.3 13.3 L11.3 19.7Z" fill="#f2f6fa"/><use href="#shield" x="18.9" y="16.2"/></svg>
<svg style="left:99px;top:31.4px" width="34" height="34" viewBox="0 0 34 34"><ellipse cx="15.6" cy="14.6" rx="14.7" ry="14" fill="url(#gRim)"/><ellipse cx="15.6" cy="27" rx="11" ry="2.2" fill="#000" opacity="0.12"/><circle cx="15.6" cy="13.3" r="12.4" fill="url(#gBlue)"/><ellipse cx="15.6" cy="7.5" rx="9.5" ry="5" fill="#fff" opacity="0.13"/><rect x="9.2" y="7.3" width="12" height="12" rx="1.2" fill="#eceef2"/><use href="#shield" x="18.9" y="16.2"/></svg>
<svg style="left:160px;top:30px" width="34" height="34" viewBox="0 0 34 34"><g fill="none"><path d="M4.5 3.5 V26.5 H30" stroke="#3b3b3b" stroke-width="1.2"/><path d="M2.5 6h2M2.5 9h2M2.5 12h2M2.5 15h2M2.5 18h2M2.5 21h2M2.5 24h2M7 26.5v2M10 26.5v2M13 26.5v2M16 26.5v2M19 26.5v2M22 26.5v2M30 26.5v2" stroke="#b8b8b8" stroke-width="0.8"/><path d="M4.5 13 L13 7.3 L21 14 L26 14 L30.2 17.5" stroke="#3a63ad" stroke-width="1.7"/><path d="M4.5 20 L10.3 16.5 L13.6 20 L22.8 8.2 L26.2 7 L30.3 4" stroke="#d0383a" stroke-width="1.7"/></g><use href="#gi" x="23.6" y="23.6"/></svg>
<svg style="left:218px;top:30px" width="34" height="34" viewBox="0 0 34 34"><path d="M7 3.5 H19 L22.5 7 V31 H7Z" fill="#dcdcdc" stroke="#bdbdbd" stroke-width="0.7"/><path d="M8.5 6h9M8.5 8.5h11M8.5 11h11M8.5 13.5h11M8.5 16h11M8.5 18.5h11M8.5 21h11M8.5 23.5h11M8.5 26h11M8.5 28.5h11" stroke="#f6f6f6" stroke-width="1.1"/><path d="M12 5V30" stroke="#f6f6f6" stroke-width="1.2"/><path d="M19 3.5 L22.5 7 H19Z" fill="#b9b9b9"/><path d="M21.5 11 C27 12 29.5 18 27.6 23.5 L29.6 24.3 L23 29.5 L21.6 21.3 L23.8 22.1 C25 18.5 24 14.5 21 13.6Z" fill="url(#gArrow)"/></svg>
<svg style="left:272px;top:30px" width="34" height="34" viewBox="0 0 34 34"><path d="M17 26 L29 20 L23 26 Z" fill="#b7bcc2" opacity="0.8"/><path d="M15.5 5.5 L21 2.5 L25.5 8 L19 12Z" fill="#f3f3f3" stroke="#d5d5d5" stroke-width="0.5"/><path d="M5.2 11.2 Q16 14.6 27 11.2 L17.8 23.5 L17.5 31.3 Q16.2 32.6 14.8 31.3 L14.6 23.5Z" fill="url(#gFun)"/><ellipse cx="16.1" cy="11.4" rx="10.9" ry="1.9" fill="#6f6f6f"/><ellipse cx="16.1" cy="11.6" rx="9.4" ry="1.2" fill="#a9a9a9"/><path d="M17 6 L22 4.2 L24 9.3 L18.6 11.6Z" fill="#f7f7f7"/></svg>
<svg style="left:325px;top:30px" width="34" height="34" viewBox="0 0 34 34"><circle cx="16.6" cy="9.6" r="7" fill="#fdfdfd" fill-opacity="0.7" stroke="#a9a9a9" stroke-width="1.7"/><path d="M12.4 15.6 L5.3 29.6" stroke="#2f2f2f" stroke-width="2.4" stroke-linecap="round"/><path d="M12.6 15.2 L10.6 19" stroke="#a0a0a0" stroke-width="2"/><path d="M6 30.6 H20" stroke="#a8a8a8" stroke-width="0.9"/><path d="M19.6 16 H24.2 V24.2 H27 L21.8 31.4 L16.6 24.2 H19.6Z" fill="url(#gArrow)"/></svg>
<svg style="left:384px;top:30px" width="34" height="34" viewBox="0 0 34 34"><use href="#db" x="7" y="4.3"/><g><rect x="17.4" y="17.6" width="4" height="14" rx="1.4" fill="#7a7a7a"/><rect x="25" y="17.6" width="4" height="14" rx="1.4" fill="#7a7a7a"/><rect x="21" y="21.6" width="4.4" height="4.6" fill="#666"/><rect x="22.2" y="19.6" width="2" height="2.4" fill="#555"/></g><path d="M18.6 19V30.6M26.2 19V30.6" stroke="#c4c4c4" stroke-width="0.9"/><rect x="17.4" y="17" width="4" height="2" rx="0.6" fill="#444"/><rect x="25" y="17" width="4" height="2" rx="0.6" fill="#444"/><rect x="17.2" y="29.6" width="4.4" height="2" rx="0.6" fill="#555"/><rect x="24.8" y="29.6" width="4.4" height="2" rx="0.6" fill="#555"/></svg>
<svg style="left:437px;top:30px" width="34" height="34" viewBox="0 0 34 34"><use href="#db" x="7" y="4.3"/><circle cx="22.6" cy="23.8" r="6.6" fill="url(#gGreen)" stroke="#4f9a18" stroke-width="0.5"/><path d="M21 19.4h3.2v2.8h2.8v3.2h-2.8v2.8H21v-2.8h-2.8v-3.2H21Z" fill="#f3f7ee"/></svg>
<svg style="left:490px;top:30px" width="34" height="34" viewBox="0 0 34 34"><use href="#db" x="7" y="4.3"/><path d="M16 16 H27.6 L30 18.4 V31 H16Z" fill="#2e2e2e"/><rect x="19" y="16.4" width="7.6" height="5" fill="#c9c9c9"/><rect x="23.4" y="17" width="2" height="3.8" fill="#333"/><rect x="18" y="23.4" width="10" height="7.2" fill="#f4f4f4"/></svg>
<svg style="left:543px;top:30px" width="34" height="34" viewBox="0 0 34 34"><use href="#db" x="7" y="4.3"/><circle cx="23" cy="24" r="6.3" fill="#b84040" stroke="#8e1d1d" stroke-width="1.5"/><path d="M20.2 21.2l5.6 5.6M25.8 21.2l-5.6 5.6" stroke="#fff" stroke-width="2.6" stroke-linecap="round"/><path d="M20.2 21.2l5.6 5.6M25.8 21.2l-5.6 5.6" stroke="#f7eeee" stroke-width="1.8" stroke-linecap="round"/></svg>
<svg style="left:595px;top:30px" width="34" height="34" viewBox="0 0 34 34"><path d="M11 2.6 L30 6 L27.6 29.4 L9 27Z" fill="#dcdcdc" stroke="#bdbdbd" stroke-width="0.5"/><path d="M8 2.6 L27.6 3.8 L27.4 29 L7.4 29.6Z" fill="#e6e6e6" stroke="#bdbdbd" stroke-width="0.5"/><path d="M4.6 3.4 H22 L25.6 7 V30.4 H4.6Z" fill="#f0f0f0" stroke="#bcbcbc" stroke-width="0.7"/><path d="M22 3.4 L25.6 7 H22Z" fill="#c9c9c9"/><path d="M7 16.6 V13 L10 9.4 L12 11.4 L14.6 8 L17.2 12 V16.6Z" fill="#2e7fa8"/><path d="M12 16.6 L14.6 10 L16 12.4 L17.2 11 V16.6Z" fill="#5aa33c"/><path d="M18.6 9h4.6M18.6 11h4.6M18.6 13h4.6M18.6 15h4.6" stroke="#bdbdbd" stroke-width="0.8"/><rect x="10.4" y="5" width="6" height="1.2" fill="#555"/><rect x="6.6" y="19" width="17" height="9.4" fill="#b4b4b4"/><path d="M6.6 22.2h17M6.6 25.4h17M10.8 19v9.4M15 19v9.4M19.2 19v9.4" stroke="#f2f2f2" stroke-width="0.9"/></svg>
<svg style="left:654px;top:30px" width="34" height="34" viewBox="0 0 34 34"><g><rect x="10" y="5.4" width="20" height="4.4" rx="0.8" fill="#3a3f49"/><rect x="10" y="10.4" width="20" height="4.4" rx="0.8" fill="#3a3f49"/><rect x="10" y="15.4" width="20" height="4.4" rx="0.8" fill="#3a3f49"/><rect x="16" y="6" width="14" height="1.6" fill="#9aa3b3"/><rect x="16" y="11" width="14" height="1.6" fill="#9aa3b3"/><rect x="16" y="16" width="14" height="1.6" fill="#9aa3b3"/><rect x="11.6" y="6.6" width="2" height="1.6" fill="#e8eefc"/><rect x="11.6" y="11.6" width="2" height="1.6" fill="#e8eefc"/></g><path d="M4.4 15.6 H16.4 L17.4 29 H3Z" fill="#1d56ae"/><path d="M3 29 H17.4 V31 H3Z" fill="#3a3a3a"/><circle cx="10.2" cy="21.6" r="4.6" fill="#2f6fd0"/><ellipse cx="9.2" cy="18.6" rx="2.2" ry="1.3" fill="#e3edff"/><path d="M5 27 L8.6 21.6" stroke="#dfe9ff" stroke-width="0.9"/><use href="#gi" x="24.4" y="24.1"/></svg>
<svg style="left:707px;top:30px" width="34" height="34" viewBox="0 0 34 34"><g transform="translate(0,2) scale(1,0.86)"><path d="M14.03 3.61 L18.77 3.61 L18.99 7.13 L21.69 8.25 L24.34 5.91 L27.69 9.26 L25.35 11.91 L26.47 14.61 L29.99 14.83 L29.99 19.57 L26.47 19.79 L25.35 22.49 L27.69 25.14 L24.34 28.49 L21.69 26.15 L18.99 27.27 L18.77 30.79 L14.03 30.79 L13.81 27.27 L11.11 26.15 L8.46 28.49 L5.11 25.14 L7.45 22.49 L6.33 19.79 L2.81 19.57 L2.81 14.83 L6.33 14.61 L7.45 11.91 L5.11 9.26 L8.46 5.91 L11.11 8.25 L13.81 7.13Z" fill="#868686" stroke="#868686" stroke-width="1.6" stroke-linejoin="round"/></g><g transform="scale(1,0.86)"><path d="M14.03 3.61 L18.77 3.61 L18.99 7.13 L21.69 8.25 L24.34 5.91 L27.69 9.26 L25.35 11.91 L26.47 14.61 L29.99 14.83 L29.99 19.57 L26.47 19.79 L25.35 22.49 L27.69 25.14 L24.34 28.49 L21.69 26.15 L18.99 27.27 L18.77 30.79 L14.03 30.79 L13.81 27.27 L11.11 26.15 L8.46 28.49 L5.11 25.14 L7.45 22.49 L6.33 19.79 L2.81 19.57 L2.81 14.83 L6.33 14.61 L7.45 11.91 L5.11 9.26 L8.46 5.91 L11.11 8.25 L13.81 7.13Z" fill="url(#gGear)" stroke="url(#gGear)" stroke-width="1.6" stroke-linejoin="round"/><path d="M13.4 15 A3.1 3.1 0 0 1 19.4 15 A3.8 3.8 0 0 0 13.4 15Z" fill="#858585"/><circle cx="16.4" cy="15.4" r="2.5" fill="#9c9c9c"/><circle cx="16.4" cy="16.1" r="2.3" fill="#dedede"/></g></svg>
<svg style="left:778px;top:30px" width="34" height="34" viewBox="0 0 34 34"><path d="M6 3 L9 2 H20.6 V24 L8 26.4 L6 24Z" fill="#46689a"/><path d="M8.6 2 H20.8 L21.4 7.4 L9.2 9.4Z" fill="url(#gCab)"/><path d="M9 9.8 L21.6 7.8 L22.4 13.6 L9.8 16Z" fill="url(#gCab)"/><path d="M9.6 16.4 L22.6 14 L23.6 19.6 L10.6 22.4Z" fill="url(#gCab)"/><path d="M12 21.4 L24.6 19.8 L24.4 20.8 L12 22.4Z" fill="#b04a4a"/><path d="M10.4 23.6 L26.4 20.6 L27 26.2 L11.4 29.4Z" fill="url(#gCab)"/><path d="M9.2 9.4 L21.4 7.4M9.8 16 L22.4 13.6M10.6 22.4 L23.6 19.6" stroke="#36557f" stroke-width="0.7"/></svg>
<svg style="left:842px;top:30px" width="34" height="34" viewBox="0 0 34 34"><circle cx="16.6" cy="15.4" r="13.1" fill="url(#gGreen)" stroke="#55a51c" stroke-width="0.8"/><circle cx="16.6" cy="15.4" r="11.8" fill="none" stroke="#a5e35a" stroke-width="0.9" opacity="0.7"/><ellipse cx="16.6" cy="9" rx="9.6" ry="5.6" fill="#fff" opacity="0.16"/><ellipse cx="16.6" cy="29.6" rx="9" ry="1.6" fill="#000" opacity="0.10"/><text x="16.6" y="23.8" text-anchor="middle" font-family="Liberation Sans, sans-serif" font-weight="bold" font-size="23" fill="#f3f7ec" stroke="#d8e8c4" stroke-width="0.4">?</text></svg>
<svg style="left:895px;top:30px" width="34" height="34" viewBox="0 0 34 34"><circle cx="16.6" cy="15.4" r="13.1" fill="url(#gGreen)" stroke="#55a51c" stroke-width="0.8"/><circle cx="16.6" cy="15.4" r="11.8" fill="none" stroke="#a5e35a" stroke-width="0.9" opacity="0.7"/><ellipse cx="16.6" cy="9" rx="9.6" ry="5.6" fill="#fff" opacity="0.16"/><ellipse cx="16.6" cy="29.6" rx="9" ry="1.6" fill="#000" opacity="0.10"/><path d="M14.4 5.6 H18.8 L19.8 8.6 H13.4Z" fill="#f4f8ee"/><path d="M13 10.2 H20.2 L18.8 24.4 H14.4Z" fill="#eef2e8"/><path d="M13 10.2 H20.2 L19.9 13 H13.3Z" fill="#fff"/></svg>
<svg style="left:6px;top:3px" width="14" height="16" viewBox="0 0 14 16"><path d="M1 15.2 C1 11.6 3.4 10.2 6.8 9.6 L9.4 9.6 C12 10.2 13.2 11.6 13.2 15.2Z" fill="#6e716d"/><path d="M5.6 9.8 L7.6 14.4 L9.4 9.8Z" fill="#e9e9e9"/><path d="M7.2 10.4 L7.9 10.4 L8.2 14 L7.6 14.8 L7 14Z" fill="#3c3c3c"/><ellipse cx="6.6" cy="5.6" rx="3.1" ry="3.9" fill="#e9c6a8"/><path d="M3.2 5 C2.6 1.6 5 0.4 7.4 0.6 C10.4 0.8 11 3.2 10 6.4 C9.8 4.6 9 3.4 7.6 3.2 C5.8 3 4.4 3.4 3.2 5Z" fill="#2a2623"/><rect x="3.6" y="4.9" width="4.4" height="1.3" fill="#3a3a3a"/><rect x="9" y="12" width="1.6" height="1.6" fill="#d8c24a"/></svg>
<svg style="left:1245px;top:11px" width="10" height="1" viewBox="0 0 10 1"><rect width="10" height="1" fill="#000"/></svg>
<svg style="left:1290px;top:6px" width="10" height="10" viewBox="0 0 10 10"><path d="M2.5 2.5 V0.5 H9.5 V7.5 H7.5" fill="none" stroke="#000" stroke-width="1"/><rect x="0.5" y="2.5" width="7" height="7" fill="none" stroke="#000" stroke-width="1"/></svg>
<svg style="left:1336px;top:6px" width="10" height="10" viewBox="0 0 10 10"><path d="M0.3 0.3 L9.7 9.7 M9.7 0.3 L0.3 9.7" stroke="#000" stroke-width="1.1"/></svg>
<svg style="left:130.8px;top:95px" width="6" height="3.6"><path d="M0 0 H6 L3 3.6Z" fill="#000"/></svg>
<svg style="left:230.8px;top:95px" width="6" height="3.6"><path d="M0 0 H6 L3 3.6Z" fill="#000"/></svg>
<svg style="left:318.6px;top:90px" width="6" height="14"><path d="M0 4.2 L2.8 1.2 L5.6 4.2Z M0 8.8 L2.8 11.8 L5.6 8.8Z" fill="#000"/></svg>
<svg style="left:511.4px;top:90px" width="6" height="14"><path d="M0 4.2 L2.8 1.2 L5.6 4.2Z M0 8.8 L2.8 11.8 L5.6 8.8Z" fill="#000"/></svg>
<svg style="left:765px;top:91px" width="10" height="10"><path d="M1.2 5 L3.8 7.8 L8.8 1.8" fill="none" stroke="#000" stroke-width="1.8"/></svg>
<svg style="left:851px;top:89px" width="14" height="14" viewBox="0 0 14 14"><circle cx="7" cy="7" r="6.3" fill="#dcdcdc" stroke="#cfcfcf" stroke-width="0.6"/><path d="M3.8 7 L6.2 9.6 L10.4 4.6" fill="none" stroke="#f2f2f2" stroke-width="2"/></svg>
<svg style="left:872px;top:89px" width="14" height="14" viewBox="0 0 14 14"><circle cx="7" cy="7" r="6.3" fill="#c4c4c4" stroke="#bbbbbb" stroke-width="0.6"/><path d="M4.4 9.6 L9.6 4.4" fill="none" stroke="#f2f2f2" stroke-width="2.6" stroke-linecap="round"/></svg>
<svg style="left:16px;top:740px" width="16" height="16" viewBox="0 0 16 16"><path d="M0 2.3 L6.5 1.4 V7.6 H0Z M7.4 1.3 L16 0 V7.6 H7.4Z M0 8.4 H6.5 V14.6 L0 13.7Z M7.4 8.4 H16 V16 L7.4 14.7Z" fill="#fff"/></svg>
<svg style="left:63px;top:739px" width="18" height="18" viewBox="0 0 18 18"><circle cx="11.6" cy="6.6" r="4.9" fill="none" stroke="#fff" stroke-width="1.3"/><path d="M8.2 10.2 L1.4 16.8" stroke="#fff" stroke-width="1.5"/></svg>
<svg style="left:110px;top:741px" width="20" height="15" viewBox="0 0 20 15"><rect x="4.5" y="0.7" width="11" height="13" fill="none" stroke="#fff" stroke-width="1.2"/><path d="M2.8 2.6 H0.6 V11.6 H2.8 M17.2 2.6 H19.4 V11.6 H17.2" fill="none" stroke="#fff" stroke-width="1.2"/></svg>
<svg style="left:160px;top:737px" width="22" height="22" viewBox="0 0 22 22"><path d="M1.2 10.2 C2 4 6.4 0.6 11.6 0.6 C17.6 0.6 21 5 21 11 L21 13 L8 13 C8.2 16 10.6 17.6 13.8 17.6 C16.2 17.6 18.4 17 20.2 16 L20.2 20 C18.2 21 16 21.6 13.2 21.6 C7 21.6 3 17.8 3 12.4 C3 9 4.8 6.4 7.4 5 C5 5.6 2.6 7.4 1.2 10.2Z M8.2 9 L15.6 9 C15.6 6.6 14.2 5 12 5 C10 5 8.6 6.6 8.2 9Z" fill="#1f7fd8" fill-rule="evenodd"/></svg>
<svg style="left:209px;top:739px" width="22" height="18" viewBox="0 0 22 18"><path d="M0.5 1.2 H8 L9.6 3 H21 V17.4 H0.5Z" fill="#e9c35d"/><path d="M0.5 4.4 H21.5 V17.4 H0.5Z" fill="#f8dc88"/><path d="M4.6 17.4 V10.6 H17.4 V17.4 H14.2 V13.6 H7.8 V17.4Z" fill="#3b9ad6"/><path d="M4.6 10.6 H17.4 V12.4 H4.6Z" fill="#59b4ea"/></svg>
<svg style="left:257px;top:736px" width="23" height="24" viewBox="0 0 23 24"><path d="M6.6 7 C6.6 2.6 8.6 0.8 11 0.8 C13.6 0.8 15.2 2.8 15.6 6.2" fill="none" stroke="#fff" stroke-width="1.1"/><path d="M0.8 7.2 L21.6 4.4 V23.2 L0.8 20.4Z" fill="#fff"/><path d="M5 11 L10 10.3 V14.2 H5Z M11 10.2 L16.6 9.4 V14.2 H11Z M5 15.2 H10 V19.1 L5 18.4Z M11 15.2 H16.6 V20 L11 19.2Z" fill="#000"/></svg>
<svg style="left:306px;top:739px" width="22" height="18" viewBox="0 0 22 18"><path d="M1 1.4 L19.6 0.6 V17.4 L1 17Z" fill="#6b9fd2"/><path d="M19.6 0.6 L21.6 1.6 V16.6 L19.6 17.4Z" fill="#a9c6e2"/><rect x="2.4" y="2.4" width="15.8" height="13.4" fill="#7fb0de"/><circle cx="10.2" cy="9" r="5.7" fill="#e7812a" stroke="#f4c9a0" stroke-width="0.7"/><path d="M8.2 5.8 L13.6 9 L8.2 12.2Z" fill="#fff"/></svg>
<svg style="left:355px;top:737px" width="24" height="23" viewBox="0 0 24 23"><ellipse cx="10.4" cy="11.6" rx="8.4" ry="5.6" fill="#8f8f8f"/><ellipse cx="11" cy="8" rx="8.6" ry="6.6" fill="#ecebf3" stroke="#d4574f" stroke-width="1.3"/><path d="M6.4 3.6 L16.6 17.4 M13.6 2.6 L12.8 17" stroke="#6a6a6a" stroke-width="1.2"/><ellipse cx="19.4" cy="13.8" rx="3.4" ry="1.9" transform="rotate(-35 19.4 13.8)" fill="none" stroke="#3d9be0" stroke-width="1.6"/><ellipse cx="14.4" cy="19" rx="1.9" ry="3.2" transform="rotate(18 14.4 19)" fill="none" stroke="#3d9be0" stroke-width="1.6"/></svg>
<svg style="left:405px;top:736px" width="22" height="20" viewBox="0 0 22 20"><rect x="0" y="0.4" width="21.6" height="19.4" fill="#c4161c"/><rect x="0" y="0.4" width="21.6" height="5" fill="#d8252b" opacity="0.6"/><path d="M4.2 16.4 C6.6 15.6 9.4 11 10.4 7 C11 4.6 10.6 3.2 9.8 3.2 C8.8 3.2 8.8 5.6 10 8.4 C11.4 11.6 14.6 13.8 17.6 13.2 C18.6 12.8 18 11.8 15.8 11.8 C12.4 11.8 7.6 13 5.2 14.8 C3.8 16 3.6 16.6 4.2 16.4Z" fill="none" stroke="#fff" stroke-width="1.2"/></svg>
<svg style="left:453px;top:736px" width="24" height="22" viewBox="0 0 24 22"><path d="M1.2 3 L14 0.8 L22.4 3.6 V17.6 H1.2Z" fill="#f5d48a"/><path d="M3 2.6 L14.6 1.6 L20 4 L20 12 L3 12Z" fill="#fdf3dc"/><path d="M1.2 6 L11.6 13 L22.4 6 V17.6 H1.2Z" fill="#f1c25e"/><path d="M1.2 17.6 L9.4 11.4 M22.4 17.6 L14 11.6" stroke="#e2a93a" stroke-width="0.8"/><circle cx="13" cy="14.6" r="6.4" fill="#f7c431" stroke="#d89a14" stroke-width="0.9"/><ellipse cx="13" cy="11.8" rx="4.4" ry="2.4" fill="#fff" opacity="0.4"/><path d="M10 13.4 L13 15.6 L16.2 12.6" fill="none" stroke="#8a5c06" stroke-width="1.1"/></svg>
<svg style="left:502px;top:736px" width="24" height="24" viewBox="0 0 24 24"><circle cx="12" cy="12" r="11" fill="#fff"/><path d="M12 12 L2.47 6.5 A11 11 0 0 1 21.53 6.5Z" fill="#db4437"/><path d="M12 12 L21.53 6.5 A11 11 0 0 1 12 23Z" fill="#f4c20d"/><path d="M12 12 L12 23 A11 11 0 0 1 2.47 6.5Z" fill="#0f9d58"/><path d="M12 7 H21.2 A11 11 0 0 0 2.47 6.5 L7.4 14Z" fill="#db4437"/><path d="M16.4 14.6 L12 23 A11 11 0 0 0 21.4 7 H12Z" fill="#f4c20d"/><path d="M7.6 14.6 L2.47 6.5 A11 11 0 0 0 12 23 L16.4 14.6Z" fill="#0f9d58"/><circle cx="12" cy="12" r="5.2" fill="#f1f1f1"/><circle cx="12" cy="12" r="4.1" fill="#4285f4"/></svg>
<svg style="left:555px;top:735px" width="20" height="24" viewBox="0 0 20 24"><path d="M1.6 22.6 C1.6 17.2 4.6 15.4 9 14.6 L12 14.6 C16 15.4 18.2 17.2 18.2 22.6Z" fill="#7a7d78"/><path d="M7.4 14.8 L10 21 L12.4 14.8Z" fill="#ececec"/><path d="M9.6 15.6 L10.6 15.6 L11 20.2 L10.1 21.6 L9.2 20.2Z" fill="#3a3a3a"/><ellipse cx="9" cy="8.6" rx="4.2" ry="5.4" fill="#ecc9aa"/><path d="M4.4 8 C3.6 3 6.8 1 10 1.2 C14 1.4 15 5 13.6 9.6 C13.4 7 12.2 5.2 10.4 5 C8 4.8 6 5.4 4.4 8Z" fill="#2a2623"/><rect x="5" y="7.6" width="6" height="1.7" fill="#3a3a3a"/><rect x="12.4" y="18" width="2.2" height="2.2" fill="#d8c24a"/></svg>
<svg style="left:1145px;top:744px" width="13" height="8" viewBox="0 0 13 8"><path d="M0.6 7 L6.5 1 L12.4 7" fill="none" stroke="#fff" stroke-width="1.2"/></svg>
<svg style="left:1167px;top:742px" width="17" height="11" viewBox="0 0 17 11"><rect x="4.6" y="3.2" width="10.6" height="6.6" fill="none" stroke="#fff" stroke-width="1.1"/><rect x="15.4" y="5" width="1.3" height="3" fill="#fff"/><rect x="6" y="4.6" width="7.8" height="3.8" fill="#fff"/><path d="M1.4 0.4 V2.6 M4 0.4 V2.6 M0.4 2.8 H5 V5 C5 6.6 3.6 7 2.7 7 C1.8 7 0.4 6.6 0.4 5Z M2.7 7 V10.6" fill="#000" stroke="#fff" stroke-width="1"/></svg>
<svg style="left:1191px;top:742px" width="15" height="12" viewBox="0 0 15 12"><path d="M0.6 4 H3 L6.2 0.8 V11.2 L3 8 H0.6Z" fill="none" stroke="#fff" stroke-width="1.1"/><path d="M9 4 L13.6 8.6 M13.6 4 L9 8.6" stroke="#fff" stroke-width="1.1"/></svg>
<svg style="left:1325px;top:740px" width="16" height="16" viewBox="0 0 16 16"><path d="M0.6 0.6 H15.4 V11.4 H10.4 L8 14 L5.6 11.4 H0.6Z" fill="none" stroke="#fff" stroke-width="1.2"/></svg>
<div class="b " style="left:1361px;top:728px;width:1px;height:40px;background:#4d4d4d;"></div>
<svg style="left:1103px;top:620px" width="16" height="14" viewBox="0 0 16 14"><ellipse cx="6" cy="7.6" rx="4.6" ry="3.6" fill="none" stroke="#fff" stroke-width="1.4"/><ellipse cx="10" cy="6.4" rx="4.6" ry="3.8" fill="none" stroke="#fff" stroke-width="1.4"/></svg>
<svg style="left:1142px;top:619px" width="18" height="18" viewBox="0 0 18 18"><path d="M7.6 1.2 C8.4 0.6 9.6 1 10 2.2 L11.4 6.6 L15.4 6.6 C16.8 6.6 17.2 8 16.4 8.8 C16 9.2 15.6 9.4 15.2 9.4 L11.4 9.6 L9.6 15.6 L7.2 16 L8.2 9.8 L4.6 9.8 L3.4 11.6 L1.6 11.6 L2.4 8.4 L1.6 5.4 L3.4 5.4 L4.6 7 L8.2 7 L6.4 1.6Z" fill="none" stroke="#fff" stroke-width="1.1" stroke-linejoin="round"/></svg>
<svg style="left:1181px;top:618px" width="18" height="18" viewBox="0 0 18 18"><rect x="1" y="1" width="13" height="13" rx="5.6" fill="#0f97a5" stroke="#e8f6f7" stroke-width="1.4"/><path d="M4.6 8.2 H10.4 C10.4 5.8 9 4.4 7.4 4.4 C5.6 4.4 4.4 5.8 4.4 7.6 C4.4 9.6 5.8 10.8 7.6 10.8 C8.6 10.8 9.4 10.6 10 10.2" fill="none" stroke="#fff" stroke-width="1.3"/><path d="M12.6 8.6 L17 15.6 H8.2Z" fill="#e0282e"/><path d="M12.6 10.6 V13.2 M12.6 14 V14.9" stroke="#fff" stroke-width="1"/></svg>
<svg style="left:1102px;top:661px" width="18" height="13" viewBox="0 0 18 13"><path d="M3.6 11.6 C1.6 11.6 0.6 10.4 0.6 9 C0.6 7.6 1.6 6.6 3 6.4 C3 4.6 4.4 3.4 6 3.4 C6.6 3.4 7 3.5 7.4 3.7 C8 2 9.4 1 11.2 1 C13.4 1 15 2.6 15.2 4.6 C16.6 5 17.4 6.2 17.4 7.6 C17.4 9.6 16 11.6 13.6 11.6Z" fill="#9e9e9e"/><path d="M5 11.6 C3.6 11.6 2.8 10.6 2.8 9.6 C2.8 8.4 3.6 7.6 4.8 7.6 C5.2 6.2 6.4 5.4 7.8 5.4 C9 5.4 10 6 10.6 7 C11 6.8 11.4 6.8 11.8 6.8 C13.2 6.8 14.2 7.8 14.2 9 C15 9.2 15.4 9.8 15.4 10.4 C15.4 11.2 14.8 11.6 14 11.6Z" fill="#b9b9b9" stroke="#555" stroke-width="0.5"/></svg>
<svg style="left:1143px;top:660px" width="16" height="16" viewBox="0 0 16 16"><rect width="16" height="16" fill="#1573d1"/><circle cx="8" cy="7.6" r="5.8" fill="#fff"/><path d="M2.8 7.6 L5.8 5.4 V6.8 H10.2 V5.4 L13.2 7.6 L10.2 9.8 V8.4 H5.8 V9.8Z" fill="#1573d1"/></svg>
<svg style="left:1181px;top:659px" width="18" height="17" viewBox="0 0 18 17"><path d="M5.6 1 L8.6 6 L3.6 14 L0.8 9.6Z" fill="#54a93c"/><path d="M3.6 14 L6 10 H16.4 L13.8 14Z" fill="#2a86c4"/><path d="M5.6 1 H9 L12 6 H8.6Z" fill="#e9bf2a"/><circle cx="12" cy="5.6" r="4.6" fill="#e88524" stroke="#f6e6d0" stroke-width="0.6"/><path d="M9.8 5.6 A2.3 2.3 0 1 1 12 7.9" fill="none" stroke="#fff" stroke-width="1.3"/><path d="M12.4 3.2 L15 5.8 L11.6 6.4Z" fill="#fff"/><path d="M8 9.6 H15.4 V11.2 H8Z" fill="#2a2a2a"/></svg>
<svg style="left:1102px;top:699px" width="18" height="17" viewBox="0 0 18 17"><ellipse cx="9" cy="8" rx="8" ry="6.4" fill="#c9ced2"/><ellipse cx="9.6" cy="9" rx="6" ry="4.4" fill="#59636b"/><path d="M2.4 10 C3.4 5 9 3.4 13.6 5.4 C10 5 6 6.6 5.4 10.4 C5.2 12.6 7.4 13.8 10 13.2 C7 15 2 14 2.4 10Z" fill="#eef1f3"/><ellipse cx="10.4" cy="10" rx="3" ry="1.8" fill="#8f9aa2"/></svg>
<svg style="left:1142px;top:698px" width="18" height="19" viewBox="0 0 18 19"><path d="M14 3.4 C10.6 0.6 5.4 1.6 3.4 5.6 C1.8 9 3 13 6 15 L8 12 C6.4 10.6 6 8.4 7 6.6 C8.2 4.6 10.8 4.2 12.6 5.6Z" fill="#d2322d"/><path d="M8.6 14 C11 16.2 15 15.2 16.4 12 L13.6 10.8 C12.8 12.4 11 12.8 9.8 11.8Z" fill="#c22621"/><path d="M10.6 2.4 L12.6 3.4 L8.6 11 L6.6 10Z" fill="#3f74c7"/><path d="M6.6 10 L8.6 11 L6.8 15.8 L1.6 14.6 C2.6 12.4 4.4 10.6 6.6 10Z" fill="#f0d7a2"/><path d="M3 14 L4.6 12 M4.6 14.6 L6 12.4" stroke="#c9a766" stroke-width="0.6"/></svg>
</div>
</body>
</html>
